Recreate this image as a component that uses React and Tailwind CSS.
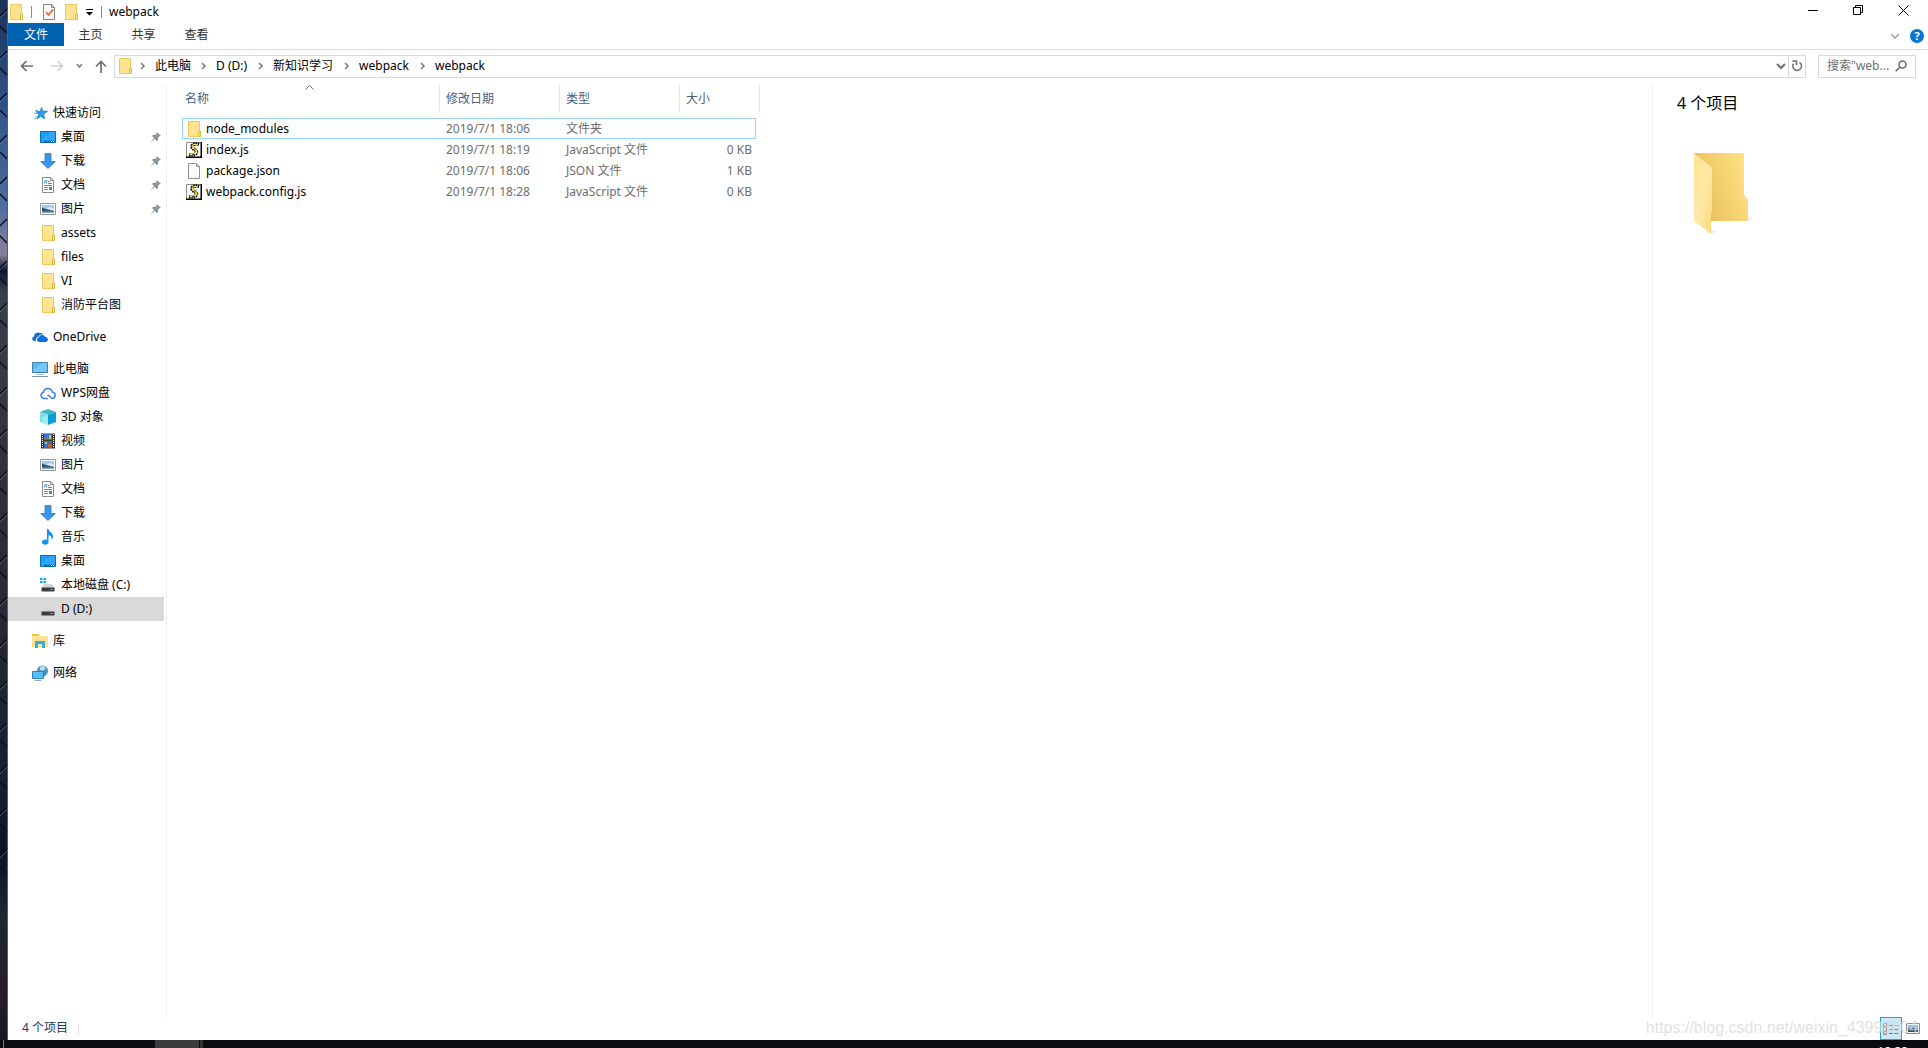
import React from "react";

const Folder = () => (
  <svg width="16" height="16" viewBox="0 0 16 16" className="shrink-0">
    <path d="M2.500.5h11v15h-11z" fill="#ffe391" stroke="#ebc95e" />
    <path d="M12.500 15.500V10.500l2-.5v5.500z" fill="#ffdf82" stroke="#e6b93c" />
  </svg>
);

const Star = () => (
  <svg width="16" height="16" viewBox="0 0 16 16" className="shrink-0">
    <path d="M9.500 2.500l1.200 3.500 4.800.3-3.800 3 1 4.700-3.700-2.700L5 14l1.500-4.500-2.500-3 4 .2z" fill="#2a9cea" stroke="#1579bd" strokeWidth=".7" />
    <path d="M3 5.500h3M2 8.500h3M3 11.500h2M2 13.500h2" stroke="#63bdf3" />
  </svg>
);

const Desktop = () => (
  <svg width="16" height="16" viewBox="0 0 16 16" className="shrink-0">
    <path d="M.5 2.500h15v11H.5z" fill="#1e9cf8" stroke="#0b6cab" />
    <path d="M1 11L10 3h5v8z" fill="#3cadff" opacity=".6" />
    <path d="M1 12.500h14" stroke="#0b6cab" />
    <path d="M2 12.500h1M11 12.500h1M13 12.500h1" stroke="#fff" />
  </svg>
);

const Download = () => (
  <svg width="16" height="16" viewBox="0 0 16 16" className="shrink-0">
    <path d="M5 .5h6v8h4.300L8 15.500.7 8.500H5z" fill="#3a96e8" stroke="#2a78c0" strokeWidth=".8" />
  </svg>
);

const Doc = () => (
  <svg width="16" height="16" viewBox="0 0 16 16" className="shrink-0">
    <path d="M2.500.5h8l3 3v12h-11z" fill="#fff" stroke="#8b8b8b" />
    <path d="M10.500.5v3h3" fill="none" stroke="#8b8b8b" />
    <path d="M4 6.500L6 3l1 3.500M8 4.500h2M8 6.500h4M4 8.500h8" fill="none" stroke="#2b94d6" />
    <path d="M4 10.500h4M4 12.500h4" stroke="#3f9bd6" />
    <path d="M9 10h3v3H9z" fill="#5c8a87" />
  </svg>
);

const Picture = () => (
  <svg width="16" height="16" viewBox="0 0 16 16" className="shrink-0">
    <path d="M.5 2.500h15v11H.5z" fill="#fff" stroke="#969696" />
    <path d="M2 4h12v8H2z" fill="#9ccbf5" />
    <path d="M2 6.500l4 1.500 8 2v1H2z" fill="#2c5b62" />
    <path d="M2 10.500h12V12H2z" fill="#7fa9bd" />
    <path d="M6 7.500l4-1.500 4 1.500v2z" fill="#dbeaf5" />
  </svg>
);

const OneDrive = () => (
  <svg width="16" height="16" viewBox="0 0 16 16" className="shrink-0">
    <path d="M4 12H2a2.300 2.300 0 0 1 0-4.500A4 4 0 0 1 8 4a4 4 0 0 1 4 1.500 5 5 0 0 0-6 2.500A3.500 3.500 0 0 0 4 12z" fill="#1573c6" />
    <path d="M7 13a2.300 2.300 0 0 1-.3-4.500 3.600 3.600 0 0 1 6.600-.6 2.600 2.600 0 0 1 .7 5.100z" fill="#0a6fd8" />
  </svg>
);

const Computer = () => (
  <svg width="16" height="16" viewBox="0 0 16 16" className="shrink-0">
    <path d="M.5 1.500h15v10H.5z" fill="#55b9f5" stroke="#3c7ea8" />
    <path d="M1 9l9-7h5v9H1z" fill="#88d2fb" opacity=".6" />
    <path d="M4 13.500h8" stroke="#b9c4cc" />
    <path d="M0 15.500h16" stroke="#7d97aa" />
  </svg>
);

const WpsCloud = () => (
  <svg width="16" height="16" viewBox="0 0 16 16" className="shrink-0" fill="none" stroke="#3c82ec" strokeWidth="1.500">
    <path d="M8 13.500H4A3.200 3.200 0 0 1 3.500 7.200 4.500 4.500 0 0 1 12.300 7a3.300 3.300 0 0 1 .2 6.500c-1.500 0-2-1-2.500-2s-1.500-1.500-2.500-.5" />
  </svg>
);

const Cube = () => (
  <svg width="16" height="16" viewBox="0 0 16 16" className="shrink-0">
    <path d="M0 3l8-3 8 3-8 2.500z" fill="#3cb6c8" />
    <path d="M0 3l8 2.500V16l-8-3z" fill="#7be0e8" />
    <path d="M16 3L8 5.500V16l8-3z" fill="#0aa0d6" />
    <path d="M2 9l6-3v10l-6-2.200z" fill="#b4f0f2" opacity=".6" />
  </svg>
);

const Film = () => (
  <svg width="16" height="16" viewBox="0 0 16 16" className="shrink-0">
    <path d="M1 .5h14v15H1z" fill="#3a3a3a" />
    <path d="M2.500 1v14M13.500 1v14" stroke="#fff" strokeDasharray="1 1" />
    <path d="M4 1h8v6H4zM4 8h8v7H4z" fill="#3471cf" />
    <path d="M5 4h3v2H5zM8 11h4v3H8z" fill="#c9602b" />
    <path d="M9 2h2v4H9zM5 9h2v2H5z" fill="#d9cc3a" />
  </svg>
);

const Music = () => (
  <svg width="16" height="16" viewBox="0 0 16 16" className="shrink-0">
    <path d="M7 0h1.500c.5 3 4.500 3.500 4.500 7.500 0 1.500-.5 2.500-1.500 3.500.8-3-1-4.500-3-5v7a3.300 2.600 0 1 1-1.500-2z" fill="#0a94f4" />
  </svg>
);

const Drive = ({ system }) => (
  <svg width="16" height="16" viewBox="0 0 16 16" className="shrink-0">
    <path d="M4 7h8l2.500 4h-13z" fill="#d3d5d8" />
    <path d="M1.500 10.500h13v4h-13z" fill="#3c3f42" />
    <path d="M10.500 12.500h2" stroke="#4fe36a" />
    {system && <path d="M0 1h2.500v2H0zM3.500 1H6v2H3.500zM0 4h2.500v2H0zM3.500 4H6v2H3.500z" fill="#00b2ef" />}
  </svg>
);

const Library = () => (
  <svg width="16" height="16" viewBox="0 0 16 16" className="shrink-0">
    <path d="M0 1h7l1 2h8v11H0z" fill="#ffe391" />
    <path d="M0 1h7v2H0z" fill="#f3c33c" />
    <path d="M3 15V8h10v7h-3v-4H6v4z" fill="#35aee4" />
  </svg>
);

const Network = () => (
  <svg width="16" height="16" viewBox="0 0 16 16" className="shrink-0">
    <circle cx="10.500" cy="6" r="5.500" fill="#4b93b8" />
    <path d="M8 2c2-2 5-1 6 1l-3 3-3-1z" fill="#b7dcec" />
    <path d="M.5 6.500h11v7H.5z" fill="#58bdf6" stroke="#2a80ba" />
    <path d="M3 15.500h6" stroke="#8fa7b7" />
  </svg>
);

const Pin = () => (
  <svg width="10" height="10" viewBox="0 0 10 10" className="shrink-0">
    <path d="M6 0l4 4-1.500.3L7 6v2L6 9 3.600 6.900.3 10 0 9.700l3-3.400L1 4l1-1h2l1.700-1.500z" fill="#8a949e" />
  </svg>
);

const Script = () => (
  <svg width="16" height="16" viewBox="0 0 16 16" className="shrink-0">
    <path d="M0 0h15v15H0z" fill="#fff" />
    <path d="M.5 15V.5H15" fill="none" stroke="#8c8c8c" />
    <path d="M0 15.250h16M15.250 0v16" stroke="#000" strokeWidth="1.500" />
    <path d="M13 2.500C9 1 5.500 2.500 6 5s4.500 2.500 4.500 5S7 13.500 3 12.500" fill="none" stroke="#000" strokeWidth="3.400" strokeDasharray="1.500 .6" />
    <path d="M11.500 3C9 2 6.300 3 6.800 5S11 7.500 10.500 9.800 7 13 3.500 12" fill="none" stroke="#efe04a" strokeWidth="1.800" />
    <path d="M7 3.500h3M8 7h2M6 12.500h3" stroke="#000" strokeWidth=".6" />
  </svg>
);

const Page = () => (
  <svg width="16" height="16" viewBox="0 0 16 16" className="shrink-0">
    <path d="M2.500.5h8l3 3v12h-11z" fill="#fafafa" stroke="#919191" />
    <path d="M10.500.5v3h3" fill="none" stroke="#919191" />
  </svg>
);

const Chevron = () => (
  <svg width="6" height="8" viewBox="0 0 6 8" className="shrink-0" fill="none" stroke="#7a7a7a" strokeWidth="1.500">
    <path d="M1 1l3 3-3 3" />
  </svg>
);

const groups = [
  {
    label: "快速访问", icon: Star,
    items: [
      { label: "桌面", icon: Desktop, pinned: true },
      { label: "下载", icon: Download, pinned: true },
      { label: "文档", icon: Doc, pinned: true },
      { label: "图片", icon: Picture, pinned: true },
      { label: "assets", icon: Folder },
      { label: "files", icon: Folder },
      { label: "VI", icon: Folder },
      { label: "消防平台图", icon: Folder },
    ],
  },
  { label: "OneDrive", icon: OneDrive, items: [] },
  {
    label: "此电脑", icon: Computer,
    items: [
      { label: "WPS网盘", icon: WpsCloud },
      { label: "3D 对象", icon: Cube },
      { label: "视频", icon: Film },
      { label: "图片", icon: Picture },
      { label: "文档", icon: Doc },
      { label: "下载", icon: Download },
      { label: "音乐", icon: Music },
      { label: "桌面", icon: Desktop },
      { label: "本地磁盘 (C:)", icon: () => <Drive system /> },
      { label: "D (D:)", icon: () => <Drive />, selected: true },
    ],
  },
  { label: "库", icon: Library, items: [] },
  { label: "网络", icon: Network, items: [] },
];

const files = [
  { name: "node_modules", date: "2019/7/1 18:06", type: "文件夹", size: "", icon: Folder, focused: true },
  { name: "index.js", date: "2019/7/1 18:19", type: "JavaScript 文件", size: "0 KB", icon: Script },
  { name: "package.json", date: "2019/7/1 18:06", type: "JSON 文件", size: "1 KB", icon: Page },
  { name: "webpack.config.js", date: "2019/7/1 18:28", type: "JavaScript 文件", size: "0 KB", icon: Script },
];

const Wallpaper = () => (
  <div className="h-full w-2 shrink-0 overflow-hidden border-r border-[#6a4a9c] bg-[#1c1a26]">
    <svg width="7" height="100%">
      <defs>
        <pattern id="mesh" width="7" height="42" patternUnits="userSpaceOnUse">
          <path d="M0 16L7 9M0 26l7 7" stroke="#0b0e1a" strokeWidth="1.500" />
          <path d="M0 18l7-7" stroke="#8a8a96" strokeWidth=".5" />
        </pattern>
        <linearGradient id="sky" x1="0" y1="0" x2="0" y2="1">
          <stop offset="0" stopColor="#1c3358" />
          <stop offset=".1" stopColor="#2f5288" />
          <stop offset=".2" stopColor="#4f6d9e" />
          <stop offset=".245" stopColor="#8b7f9c" />
          <stop offset=".26" stopColor="#0c1434" />
          <stop offset=".28" stopColor="#3a3d4c" />
          <stop offset=".6" stopColor="#262833" />
          <stop offset=".75" stopColor="#142030" />
          <stop offset=".82" stopColor="#0b1426" />
          <stop offset=".88" stopColor="#1c2832" />
          <stop offset=".96" stopColor="#281c28" />
          <stop offset="1" stopColor="#16162a" />
        </linearGradient>
      </defs>
      <rect width="7" height="100%" fill="url(#sky)" />
      <rect width="7" height="85%" fill="url(#mesh)" />
    </svg>
  </div>
);

function TitleBar() {
  return (
    <header className="flex h-[23px] items-center">
      <Folder />
      <span className="ml-[7px] h-3 w-px bg-[#8c8c8c]" />
      <button className="ml-[9px]" aria-label="属性">
        <svg width="16" height="16" viewBox="0 0 16 16">
          <path d="M2.500.5h8l3 3v12h-11z" fill="#f8f8f8" stroke="#858585" />
          <path d="M10.500.5v3h3" fill="none" stroke="#858585" />
          <path d="M5 8l2.500 3L12 5.500" fill="none" stroke="#ec6025" strokeWidth="1.700" />
        </svg>
      </button>
      <button className="ml-1.5" aria-label="新建文件夹"><Folder /></button>
      <button className="ml-[7px]" aria-label="自定义快速访问工具栏">
        <svg width="8" height="8" viewBox="0 0 8 8"><path d="M0 1h7v1H0zM0 4h7L3.500 7.500z" fill="#000" /></svg>
      </button>
      <span className="ml-[7px] h-3 w-px bg-[#8c8c8c]" />
      <h1 className="ml-[7px] text-black">webpack</h1>
      <div className="ml-auto flex h-full items-center gap-[34px] pr-[19px] pb-0.5">
        <button aria-label="最小化">
          <svg width="11" height="11"><path d="M0 5.500h10" stroke="#000" /></svg>
        </button>
        <button aria-label="还原">
          <svg width="11" height="11" fill="none" stroke="#000"><path d="M.5 2.500h7v7h-7zM2.500 2.500v-2h7v7h-2" /></svg>
        </button>
        <button aria-label="关闭">
          <svg width="11" height="11" stroke="#000"><path d="M.5.5l10 10M10.500.5l-10 10" /></svg>
        </button>
      </div>
    </header>
  );
}

function Ribbon() {
  return (
    <nav className="flex h-[27px] items-start border-b border-[#dadbdc]">
      <button className="h-[23px] w-14 bg-[#0063b1] text-white">文件</button>
      <button className="h-6 w-[53px] text-[#333]">主页</button>
      <button className="h-6 w-[53px] text-[#333]">共享</button>
      <button className="h-6 w-[53px] text-[#333]">查看</button>
      <div className="ml-auto flex h-[26px] items-center gap-2.5 pr-1">
        <button aria-label="展开功能区">
          <svg width="10" height="6" fill="none" stroke="#9a9a9a" strokeWidth="1.300"><path d="M1 1l4 4 4-4" /></svg>
        </button>
        <button className="flex size-3.5 items-center justify-center rounded-full bg-[#0a74d6] text-[11px] font-bold leading-3 text-white" aria-label="帮助">?</button>
      </div>
    </nav>
  );
}

function AddressBar() {
  return (
    <div className="flex h-[35px] items-center px-3 pb-[3px]">
      <button aria-label="后退">
        <svg width="13" height="12" fill="none" stroke="#6e6e6e" strokeWidth="1.700"><path d="M13 6H1.500M6.500 1l-5 5 5 5" /></svg>
      </button>
      <button className="ml-[18px]" aria-label="前进">
        <svg width="13" height="12" fill="none" stroke="#d2d2d2" strokeWidth="1.700"><path d="M0 6h11.500M6.500 1l5 5-5 5" /></svg>
      </button>
      <button className="ml-3" aria-label="最近浏览的位置">
        <svg width="7" height="6" fill="none" stroke="#7c7c7c" strokeWidth="1.500"><path d="M1 1l2.500 3L6 1" /></svg>
      </button>
      <button className="ml-3" aria-label="上移">
        <svg width="12" height="13" fill="none" stroke="#6e6e6e" strokeWidth="1.700"><path d="M6 13V1.500M1 6.500l5-5 5 5" /></svg>
      </button>
      <div className="ml-[7px] flex h-[23px] min-w-0 flex-1 items-center border border-[#d9d9d9] pl-0.5 text-black">
        <Folder />
        <span className="ml-[7px]"><Chevron /></span>
        <button className="ml-[9px]">此电脑</button>
        <span className="ml-2.5"><Chevron /></span>
        <button className="ml-[9px]">D (D:)</button>
        <span className="ml-[11px]"><Chevron /></span>
        <button className="ml-[9px]">新知识学习</button>
        <span className="ml-[11px]"><Chevron /></span>
        <button className="ml-[9px]">webpack</button>
        <span className="ml-[11px]"><Chevron /></span>
        <button className="ml-[9px]">webpack</button>
        <button className="mr-0.5 ml-auto" aria-label="上一个位置">
          <svg width="10" height="7" fill="none" stroke="#6e6e6e" strokeWidth="2"><path d="M1 1l4 4 4-4" /></svg>
        </button>
        <button className="flex h-full w-[17px] items-center justify-center border-l border-[#d9d9d9]" aria-label="刷新">
          <svg width="12" height="12" viewBox="0 0 12 12" fill="none" stroke="#6e6e6e" strokeWidth="1.600">
            <path d="M8.500 2.500a4.300 4.300 0 1 1-6 1.300M1.500 1h4v4" />
          </svg>
        </button>
      </div>
      <div className="ml-3 flex h-[23px] w-[98px] items-center border border-[#d9d9d9] pr-2 pl-2">
        <input className="w-0 min-w-0 flex-1 outline-none placeholder:text-[#6d6d6d]" placeholder={'搜索"web...'} aria-label="搜索" />
        <svg width="12" height="12" viewBox="0 0 12 12" fill="none" stroke="#6e6e6e" strokeWidth="1.600">
          <circle cx="7.500" cy="4.500" r="3.500" /><path d="M5 7L.7 11.300" />
        </svg>
      </div>
    </div>
  );
}

function Sidebar() {
  return (
    <aside className="flex w-[159px] shrink-0 flex-col gap-2 border-r border-[#f0f0f0] pt-4 text-black">
      {groups.map(({ label, icon: Icon, items }) => (
        <div key={label}>
          <button className="flex h-6 w-[156px] items-center gap-[5px] pl-6"><Icon />{label}</button>
          {items.map((item) => (
            <button
              key={item.label}
              className={`flex h-6 w-[156px] items-center gap-[5px] pr-[3px] pl-8 ${item.selected ? "bg-[#d9d9d9]" : ""}`}
            >
              <item.icon />
              <span className="flex-1 whitespace-nowrap text-left">{item.label}</span>
              {item.pinned && <Pin />}
            </button>
          ))}
        </div>
      ))}
    </aside>
  );
}

function FileTable() {
  const head = "flex h-[27px] items-center border-r border-[#e5e5e5] font-normal";
  return (
    <main className="min-w-0 flex-1 pl-[15px]">
      <table className="w-[578px] table-fixed border-separate border-spacing-0 text-left">
        <colgroup>
          <col className="w-[258px]" />
          <col className="w-[120px]" />
          <col className="w-[120px]" />
          <col className="w-[76px]" />
          <col className="w-1" />
        </colgroup>
        <thead className="text-[#4c607a]">
          <tr>
            <th className="h-[33px] p-0 align-top">
              <div className={`${head} relative pl-[3px]`}>
                名称
                <svg width="9" height="5" className="absolute inset-x-0 top-0 mr-auto ml-[123px]" fill="none" stroke="#6e6e6e"><path d="M.5 4.500l4-4 4 4" /></svg>
              </div>
            </th>
            <th className="p-0 align-top"><div className={`${head} pl-1.5`}>修改日期</div></th>
            <th className="p-0 align-top"><div className={`${head} pl-1.5`}>类型</div></th>
            <th className="p-0 align-top" colSpan={2}><div className={`${head} pl-1.5`}>大小</div></th>
          </tr>
        </thead>
        <tbody className="text-[#6d6d6d]">
          {files.map((f) => {
            const line = f.focused ? "border-y border-[#99d1ff]" : "border-y border-transparent";
            return (
              <tr key={f.name}>
                <td className={`h-[21px] border-l p-0 ${line}`}>
                  <div className="flex items-center gap-1 pl-[3px] text-black"><f.icon />{f.name}</div>
                </td>
                <td className={`p-0 pl-1.5 ${line}`}>{f.date}</td>
                <td className={`p-0 pl-1.5 ${line}`}>{f.type}</td>
                <td className={`border-r p-0 pr-[3px] text-right ${line}`}>{f.size}</td>
                <td className="p-0" />
              </tr>
            );
          })}
        </tbody>
      </table>
    </main>
  );
}

function Details() {
  return (
    <aside className="w-[276px] shrink-0 border-l border-[#f0f0f0] pt-1.5 pl-6 text-black">
      <h2 className="text-base leading-6">4 个项目</h2>
      <svg width="64" height="84" viewBox="0 0 64 84" className="mt-[37px] ml-4">
        <defs>
          <linearGradient id="back" x1="0" y1=".7" x2="1" y2=".3">
            <stop offset="0" stopColor="#e3ba55" /><stop offset=".5" stopColor="#f2cf6c" /><stop offset="1" stopColor="#ffe083" />
          </linearGradient>
          <linearGradient id="front" x1="0" y1="0" x2="1" y2="1">
            <stop offset="0" stopColor="#ffe391" /><stop offset=".5" stopColor="#ffe9a8" /><stop offset="1" stopColor="#fbd977" />
          </linearGradient>
        </defs>
        <path d="M55 69l6-3-6-1zM18 82l7-3-7-1z" fill="#efefef" />
        <path d="M1 1h50v42l4 5v21H17z" fill="url(#back)" />
        <path d="M1 1l18 15v43l-1 2v21L1 69z" fill="url(#front)" />
      </svg>
    </aside>
  );
}

function StatusBar() {
  return (
    <footer className="flex h-[23px] items-center">
      <span className="ml-3.5 pb-0.5 text-[#1e395b]">4 个项目</span>
      <span className="ml-2.5 h-3 w-px bg-[#e8e8e8]" />
      <div className="relative ml-auto flex h-full items-center gap-1 pr-2">
        <button className="flex h-[23px] w-[22px] items-center justify-center border border-[#26a0da] bg-[#cbe8f6]" aria-label="详细信息">
          <svg width="16" height="12" viewBox="0 0 16 12" fill="none">
            <path d="M.5.5h3v3h-3zM.5 4.500h3v3h-3zM.5 8.500h3v3h-3z" fill="#fff" stroke="#8a8a8a" />
            <path d="M6 2.500h4M11.500 2.500h4M6 6.500h4M11.500 6.500h4M6 10.500h4M11.500 10.500h4" stroke="#6f7f8b" />
            <path d="M1.500 10h1" stroke="#e33" />
          </svg>
        </button>
        <button aria-label="大缩略图">
          <svg width="14" height="11" viewBox="0 0 14 11">
            <path d="M.5.5h13v10H.5z" fill="#fff" stroke="#8a8a8a" />
            <path d="M2 2h10v7H2z" fill="#7fb7f0" />
            <path d="M2 5l3 1 3-1 4 2v2H2z" fill="#2f5561" />
          </svg>
        </button>
        <span className="pointer-events-none absolute right-2.5 bottom-0.5 font-['Liberation_Sans',sans-serif] text-base leading-5 whitespace-nowrap text-[#d9d9d9]/80">
          https://blog.csdn.net/weixin_43998604
        </span>
      </div>
    </footer>
  );
}

export default function App() {
  return (
    <div className="flex h-screen flex-col overflow-hidden bg-white font-['Noto_Sans','Noto_Sans_CJK_SC',sans-serif] text-xs">
      <div className="flex min-h-0 flex-1">
        <Wallpaper />
        <div className="flex min-w-0 flex-1 flex-col">
          <TitleBar />
          <Ribbon />
          <AddressBar />
          <div className="flex min-h-0 flex-1">
            <Sidebar />
            <FileTable />
            <Details />
          </div>
          <StatusBar />
        </div>
      </div>
      <div className="flex h-2 shrink-0 overflow-hidden bg-[#0c0c10]">
        <span className="ml-[3px] w-px bg-[#777]" />
        <span className="ml-[151px] w-11 bg-[#3c3c3c]" />
        <span className="ml-px w-[3px] bg-[#333]" />
        <span className="mt-1 mr-5 ml-auto leading-4 text-white">18:28</span>
      </div>
    </div>
  );
}
